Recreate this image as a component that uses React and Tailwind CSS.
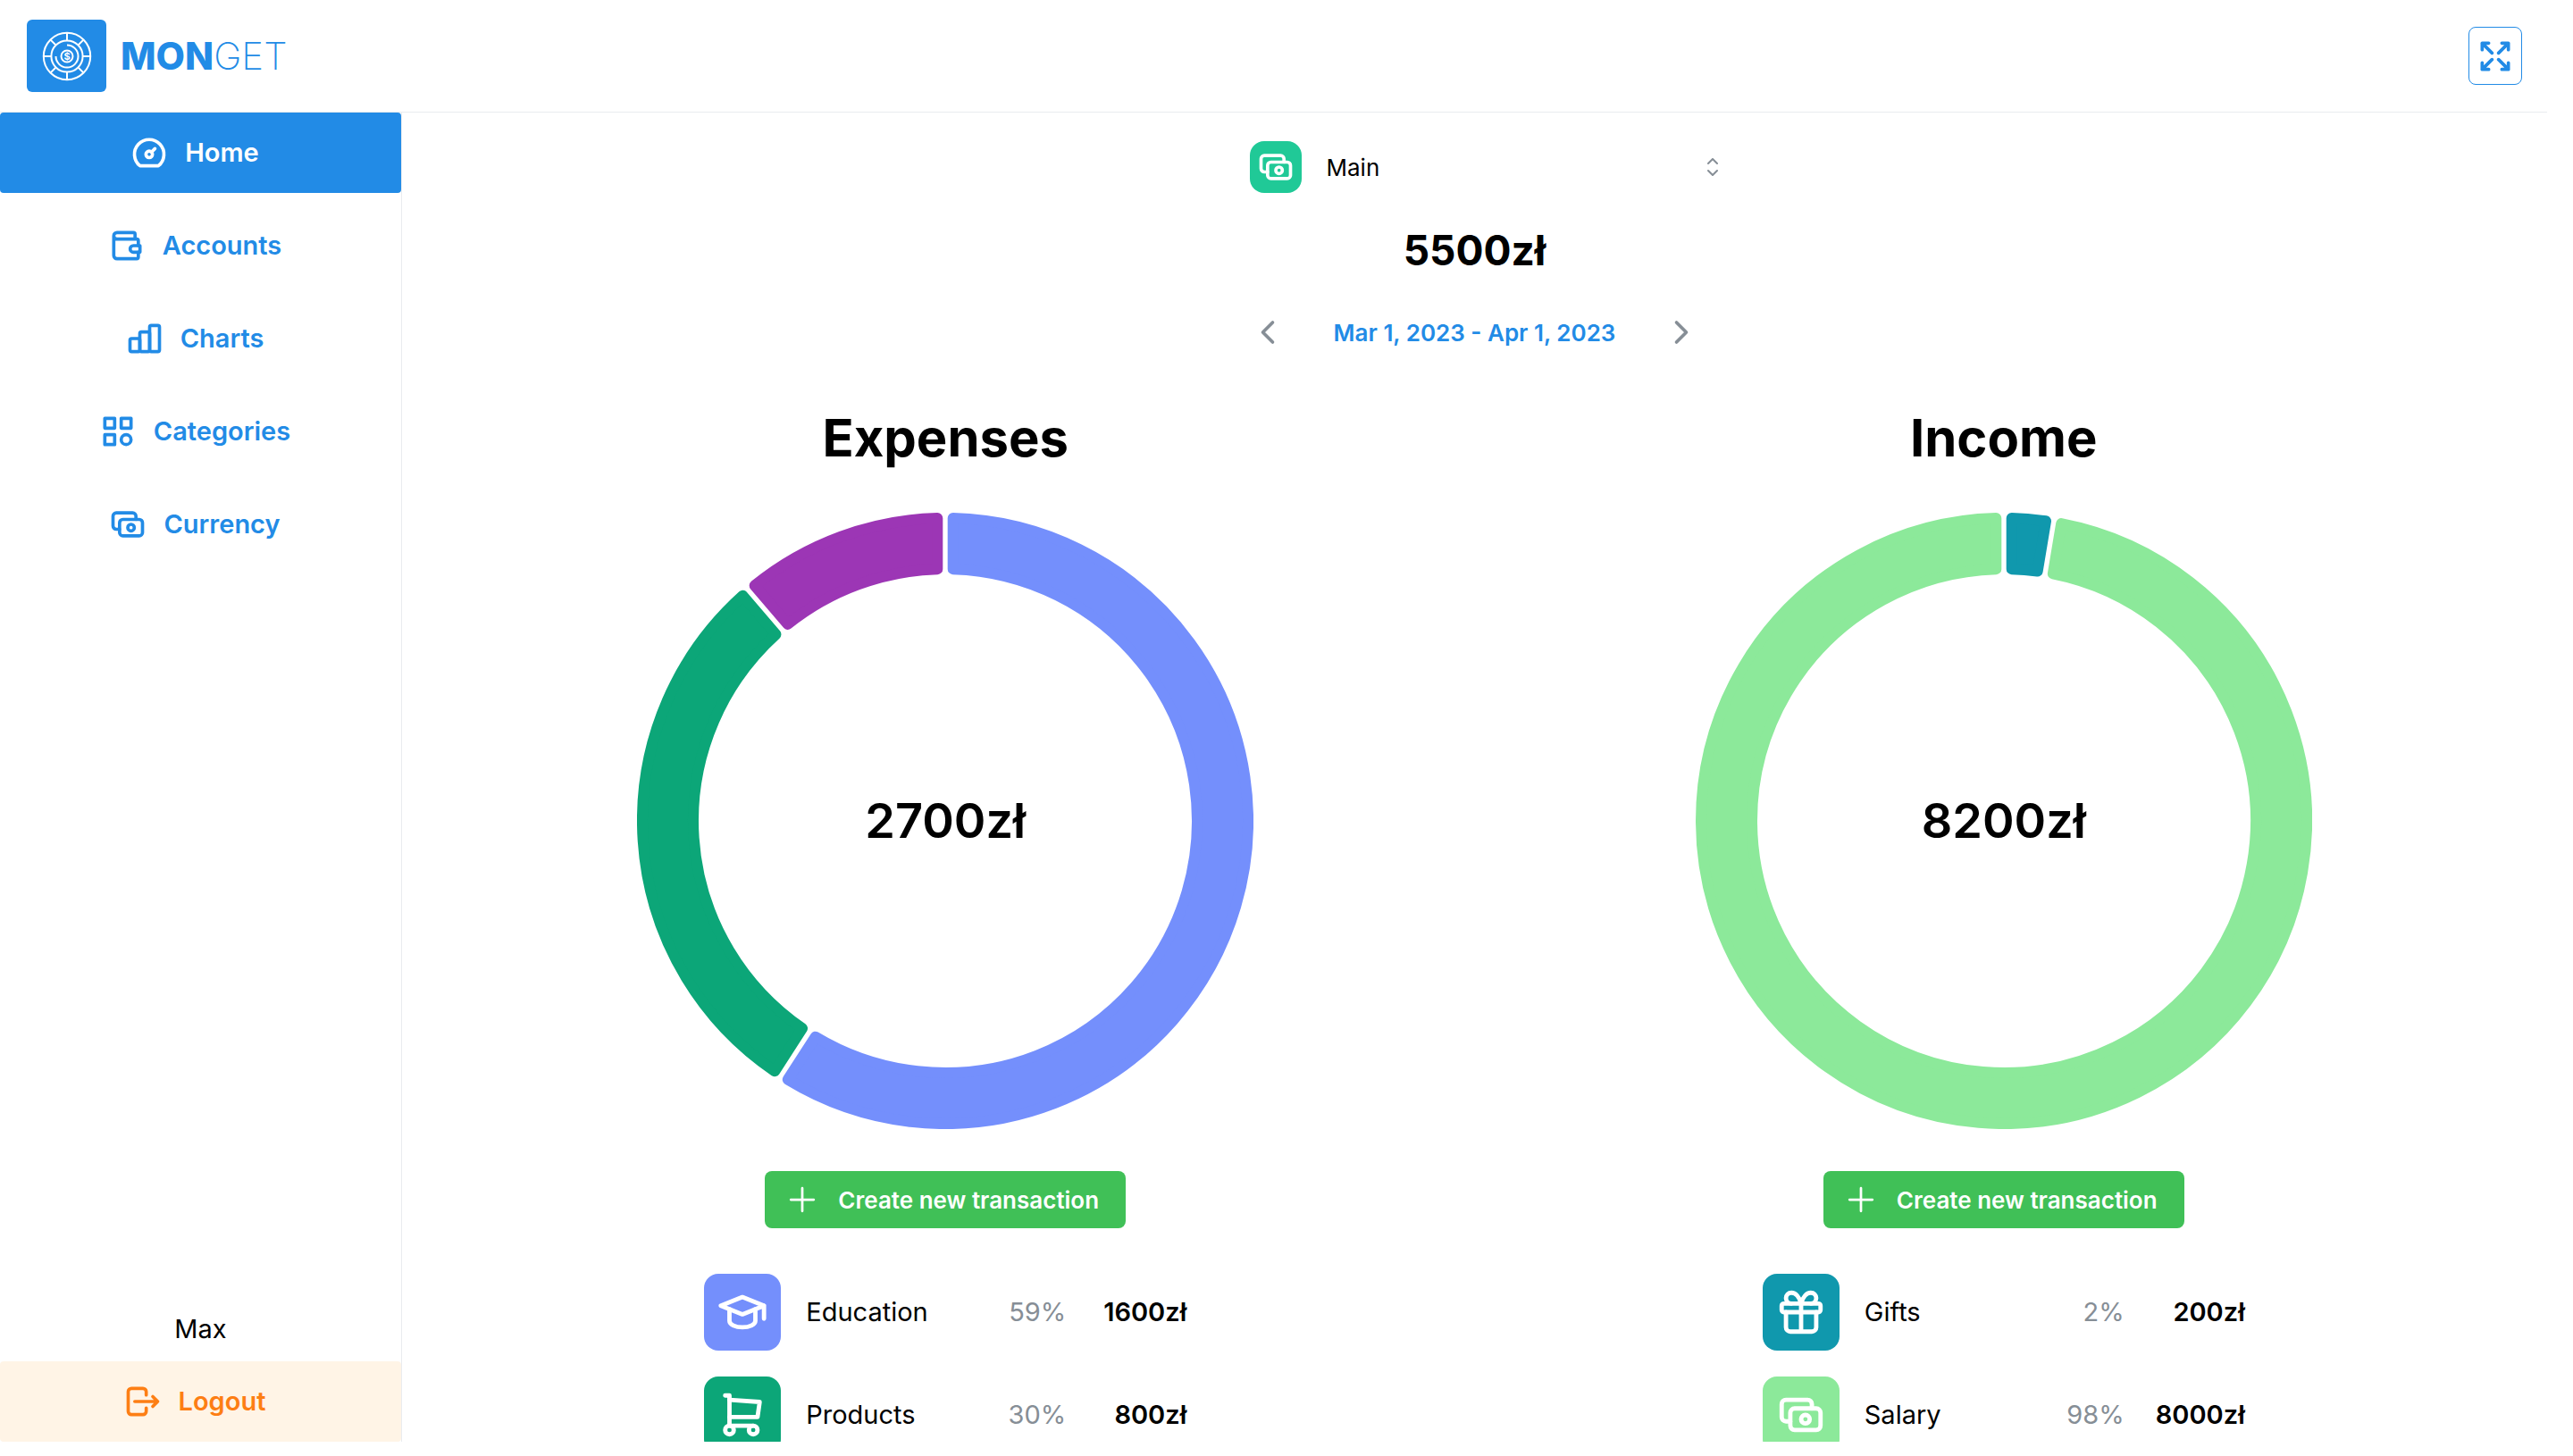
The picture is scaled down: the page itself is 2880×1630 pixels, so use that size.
import { useState } from 'react';

const strokeIcon = {
  fill: 'none',
  stroke: 'currentColor',
  strokeWidth: 2,
  strokeLinecap: 'round',
  strokeLinejoin: 'round',
  viewBox: '0 0 24 24',
  'aria-hidden': true,
};

function Icon({ children, className = 'size-11', strokeWidth = 2 }) {
  return (
    <svg {...strokeIcon} strokeWidth={strokeWidth} className={`shrink-0 ${className}`}>
      {children}
    </svg>
  );
}

const GaugeIcon = (p) => (
  <Icon {...p}>
    <circle cx="12" cy="13" r="2" />
    <path d="M13.45 11.55 15.5 9.5" />
    <path d="M6.4 20a9 9 0 1 1 11.2 0Z" />
  </Icon>
);
const WalletIcon = (p) => (
  <Icon {...p}>
    <path d="M17 8V5a1 1 0 0 0-1-1H6a2 2 0 0 0 0 4h12a1 1 0 0 1 1 1v3m0 4v3a1 1 0 0 1-1 1H6a2 2 0 0 1-2-2V6" />
    <path d="M20 12v4h-4a2 2 0 0 1 0-4h4" />
  </Icon>
);
const BarsIcon = (p) => (
  <Icon {...p}>
    <rect x="3" y="12" width="6" height="8" rx="1" />
    <rect x="9" y="8" width="6" height="12" rx="1" />
    <rect x="15" y="4" width="6" height="16" rx="1" />
  </Icon>
);
const CategoryIcon = (p) => (
  <Icon {...p}>
    <path d="M4 4h6v6H4zM14 4h6v6h-6zM4 14h6v6H4z" />
    <circle cx="17" cy="17" r="3" />
  </Icon>
);
const CashIcon = (p) => (
  <Icon {...p}>
    <rect x="7" y="9" width="14" height="10" rx="2" />
    <circle cx="14" cy="14" r="2" />
    <path d="M17 9V7a2 2 0 0 0-2-2H5a2 2 0 0 0-2 2v6a2 2 0 0 0 2 2h2" />
  </Icon>
);
const LogoutIcon = (p) => (
  <Icon {...p}>
    <path d="M14 8V6a2 2 0 0 0-2-2H5a2 2 0 0 0-2 2v12a2 2 0 0 0 2 2h7a2 2 0 0 0 2-2v-2" />
    <path d="M7 12h14l-3-3m0 6 3-3" />
  </Icon>
);
const MaximizeIcon = (p) => (
  <Icon {...p}>
    <path d="M16 4h4v4M14 10l6-6M8 20H4v-4M4 20l6-6M16 20h4v-4M14 14l6 6M8 4H4v4M4 4l6 6" />
  </Icon>
);
const SchoolIcon = (p) => (
  <Icon {...p}>
    <path d="M22 9 12 5 2 9l10 4 10-4v6" />
    <path d="M6 10.600v5.400a6 3 0 0 0 12 0v-5.400" />
  </Icon>
);
const CartIcon = (p) => (
  <Icon {...p}>
    <circle cx="6" cy="19" r="2" />
    <circle cx="17" cy="19" r="2" />
    <path d="M17 17H6V3H4" />
    <path d="m6 5 14 1-1 7H6" />
  </Icon>
);
const GiftIcon = (p) => (
  <Icon {...p}>
    <rect x="3" y="8" width="18" height="4" rx="1" />
    <path d="M12 8v13M19 12v7a2 2 0 0 1-2 2H7a2 2 0 0 1-2-2v-7" />
    <path d="M7.500 8a2.500 2.500 0 0 1 0-5A4.800 8 0 0 1 12 8a4.800 8 0 0 1 4.500-5 2.500 2.500 0 0 1 0 5" />
  </Icon>
);

function Logo() {
  return (
    <a href="#home" aria-label="Monget" className="flex items-center gap-4">
      <span className="flex h-[81px] w-[89px] items-center justify-center rounded-md bg-[#228be6] text-white">
        <svg viewBox="-28 -28 56 56" className="size-14" fill="none" stroke="currentColor" strokeWidth="2" aria-hidden="true">
          <circle r="26.200" />
          <circle r="17.600" />
          <circle r="6.500" />
          {[0, 45, 90, 135, 180, 225, 270, 315].map((a) => (
            <path key={a} d="M0-26V-18" transform={`rotate(${a})`} />
          ))}
          <path d="M0-12.500A12.500 12.500 0 1 1-12.500 0" />
          <text y="4" textAnchor="middle" fontSize="11" fontWeight="700" fill="currentColor" stroke="none">
            $
          </text>
        </svg>
      </span>
      <span className="text-[42px] leading-none text-[#228be6]">
        <span className="font-extrabold">MON</span>
        <span className="font-extralight">GET</span>
      </span>
    </a>
  );
}

const navItems = [
  { label: 'Home', icon: GaugeIcon, active: true },
  { label: 'Accounts', icon: WalletIcon },
  { label: 'Charts', icon: BarsIcon },
  { label: 'Categories', icon: CategoryIcon },
  { label: 'Currency', icon: CashIcon },
];

function Sidebar() {
  return (
    <aside className="flex w-[450px] shrink-0 flex-col justify-between border-r border-[#e9ecef]">
      <nav className="flex flex-col gap-3.5">
        {navItems.map(({ label, icon: NavIcon, active }) => (
          <a
            key={label}
            href={`#${label.toLowerCase()}`}
            className={`flex h-[90px] items-center justify-center gap-[18px] rounded pr-3.5 text-[29px] font-semibold ${
              active ? 'bg-[#228be6] text-white' : 'text-[#228be6]'
            }`}
          >
            <NavIcon />
            {label}
          </a>
        ))}
      </nav>
      <div className="flex flex-col items-center">
        <p className="mb-4 text-[29px] leading-10">Max</p>
        <button
          type="button"
          className="flex h-[90px] w-full items-center justify-center gap-[18px] rounded bg-[#fff4e6] pr-3.5 text-[29px] font-semibold text-[#fd7e14]"
        >
          <LogoutIcon />
          Logout
        </button>
      </div>
    </aside>
  );
}

const RADIUS = 345;
const INNER = 276;
const HALF_GAP = 2.7;
const CORNER = 6;
const PAD_ANGLE = 0.0122;

const pt = (r, a) => `${(r * Math.sin(a)).toFixed(2)} ${(-r * Math.cos(a)).toFixed(2)}`;

function segmentPath(start, end) {
  const o = RADIUS - CORNER;
  const i = INNER + CORNER;
  const ho = (HALF_GAP + CORNER) / o;
  const hi = (HALF_GAP + CORNER) / i;
  const large = end - start > Math.PI ? 1 : 0;
  return `M${pt(o, start + ho)}A${o} ${o} 0 ${large} 1 ${pt(o, end - ho)}L${pt(i, end - hi)}A${i} ${i} 0 ${large} 0 ${pt(i, start + hi)}Z`;
}

function Donut({ items, total }) {
  const sum = items.reduce((s, it) => s + it.value, 0);
  const available = Math.PI * 2 - items.length * PAD_ANGLE;
  let angle = 0;
  const segments = items.map((it) => {
    const start = angle;
    angle += (it.value / sum) * available + PAD_ANGLE;
    return { color: it.color, d: segmentPath(start, angle) };
  });
  return (
    <div className="grid place-items-center">
      <svg viewBox="-345 -345 690 690" className="col-start-1 row-start-1 w-[690px]" role="img" aria-label={`Total ${total}`}>
        {segments.map((s) => (
          <path key={s.d} d={s.d} fill={s.color} stroke={s.color} strokeWidth={CORNER * 2} strokeLinejoin="round" />
        ))}
      </svg>
      <p className="col-start-1 row-start-1 text-[54px] leading-none font-semibold">{total}</p>
    </div>
  );
}

const expenses = [
  { name: 'Education', value: 1600, percent: '59%', color: '#748ffc', icon: SchoolIcon },
  { name: 'Products', value: 800, percent: '30%', color: '#0ca678', icon: CartIcon },
  { name: 'Entertainment', value: 300, percent: '11%', color: '#9c36b5', icon: GiftIcon },
];
const income = [
  { name: 'Gifts', value: 200, percent: '2%', color: '#1098ad', icon: GiftIcon },
  { name: 'Salary', value: 8000, percent: '98%', color: '#8ce99a', icon: CashIcon },
];

function Summary({ title, items, total }) {
  return (
    <section className="flex flex-col items-center">
      <h2 className="text-[58px] leading-[72px] font-bold">{title}</h2>
      <div className="mt-12">
        <Donut items={items} total={total} />
      </div>
      <button
        type="button"
        className="mt-[47px] flex h-16 items-center gap-[18px] rounded-lg bg-[#40c057] pr-[30px] pl-5 text-[26px] font-semibold text-white"
      >
        <Icon strokeWidth={1.5}>
          <path d="M12 5v14M5 12h14" />
        </Icon>
        Create new transaction
      </button>
      <ul className="mt-[51px] flex w-[540px] flex-col gap-[29px] text-[29px]">
        {items.slice(0, 2).map(({ name, value, percent, color, icon: ItemIcon }) => (
          <li key={name} className="flex h-[86px] items-center">
            <span className="mr-7 flex size-[86px] items-center justify-center rounded-2xl text-white" style={{ backgroundColor: color }}>
              <ItemIcon className="size-[58px]" />
            </span>
            <span className="flex-1">{name}</span>
            <span className="text-[#868e96]">{percent}</span>
            <span className="w-[135px] text-right font-semibold">{value}zł</span>
          </li>
        ))}
      </ul>
    </section>
  );
}

export default function App() {
  const [account, setAccount] = useState('Main');
  return (
    <div className="h-screen bg-white pr-[29px] pb-4 font-['Inter','Liberation_Sans',sans-serif] text-black">
      <div className="flex h-full flex-col overflow-hidden">
        <header className="flex h-[126px] shrink-0 items-center justify-between border-b border-[#e9ecef] pr-7 pl-[30px]">
          <Logo />
          <button
            type="button"
            aria-label="Toggle fullscreen"
            className="flex h-[65px] w-[60px] items-center justify-center rounded-lg border border-[#228be6] text-[#228be6]"
          >
            <MaximizeIcon />
          </button>
        </header>
        <div className="flex min-h-0 flex-1">
          <Sidebar />
          <main className="min-w-0 flex-1 overflow-hidden px-4 pt-8">
            <div className="flex flex-col items-center">
              <div className="flex h-[58px] w-[556px] items-center pr-1.5 pl-[26px]">
                <span className="mr-7 flex size-[58px] items-center justify-center rounded-2xl bg-[#20c997] text-white">
                  <CashIcon />
                </span>
                <select
                  aria-label="Account"
                  value={account}
                  onChange={(e) => setAccount(e.target.value)}
                  className="h-full flex-1 appearance-none bg-transparent text-[26px] outline-none"
                >
                  <option>Main</option>
                </select>
                <svg viewBox="0 0 12 20" className="h-5 w-3 text-[#868e96]" fill="none" stroke="currentColor" strokeWidth="2" strokeLinecap="round" strokeLinejoin="round" aria-hidden="true">
                  <path d="m1 6 5-5 5 5M1 14l5 5 5-5" />
                </svg>
              </div>
              <p className="mt-[34px] text-[46px] leading-[60px] font-bold">5500zł</p>
              <div className="mt-10 flex w-[508px] items-center justify-between">
                <button type="button" aria-label="Previous period" className="text-[#868e96]">
                  <Icon>
                    <path d="m15 6-6 6 6 6" />
                  </Icon>
                </button>
                <button type="button" className="text-[26px] font-semibold text-[#228be6]">
                  Mar 1, 2023 - Apr 1, 2023
                </button>
                <button type="button" aria-label="Next period" className="text-[#868e96]">
                  <Icon>
                    <path d="m9 6 6 6-6 6" />
                  </Icon>
                </button>
              </div>
            </div>
            <div className="mt-[60px] grid grid-cols-2">
              <Summary title="Expenses" items={expenses} total="2700zł" />
              <Summary title="Income" items={income} total="8200zł" />
            </div>
          </main>
        </div>
      </div>
    </div>
  );
}
